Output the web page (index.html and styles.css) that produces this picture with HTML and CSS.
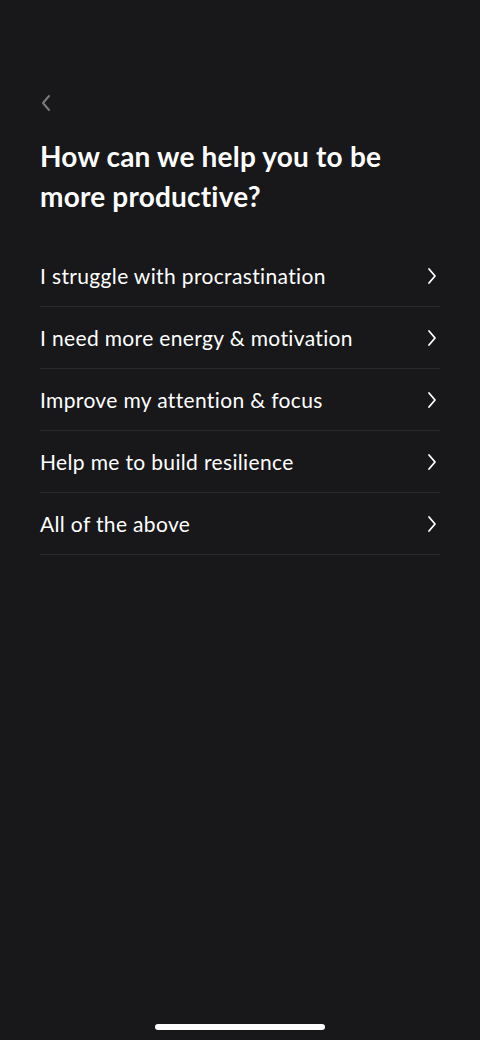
FILE: index.html
```html
<!DOCTYPE html>
<html lang="en">
<head>
    <meta charset="UTF-8">
    <meta name="viewport" content="width=device-width, initial-scale=1.0">
    <title>Productivity Goals</title>
    <link rel="stylesheet" href="styles.css">
</head>
<body>

<div class="screen">
    <button class="back-btn" aria-label="Back">
        <svg width="12" height="18" viewBox="0 0 12 18"><path d="M9 2 L3 9 L9 16" fill="none" stroke="#7a7a7c" stroke-width="2" stroke-linecap="round" stroke-linejoin="round"/></svg>
    </button>

    <h1>How can we help you to be more productive?</h1>

    <ul class="options">
        <li>
            <span>I struggle with procrastination</span>
            <svg width="12" height="18" viewBox="0 0 12 18"><path d="M3 2 L9 9 L3 16" fill="none" stroke="#fff" stroke-width="1.8" stroke-linecap="round" stroke-linejoin="round"/></svg>
        </li>
        <li>
            <span>I need more energy &amp; motivation</span>
            <svg width="12" height="18" viewBox="0 0 12 18"><path d="M3 2 L9 9 L3 16" fill="none" stroke="#fff" stroke-width="1.8" stroke-linecap="round" stroke-linejoin="round"/></svg>
        </li>
        <li>
            <span>Improve my attention &amp; focus</span>
            <svg width="12" height="18" viewBox="0 0 12 18"><path d="M3 2 L9 9 L3 16" fill="none" stroke="#fff" stroke-width="1.8" stroke-linecap="round" stroke-linejoin="round"/></svg>
        </li>
        <li>
            <span>Help me to build resilience</span>
            <svg width="12" height="18" viewBox="0 0 12 18"><path d="M3 2 L9 9 L3 16" fill="none" stroke="#fff" stroke-width="1.8" stroke-linecap="round" stroke-linejoin="round"/></svg>
        </li>
        <li>
            <span>All of the above</span>
            <svg width="12" height="18" viewBox="0 0 12 18"><path d="M3 2 L9 9 L3 16" fill="none" stroke="#fff" stroke-width="1.8" stroke-linecap="round" stroke-linejoin="round"/></svg>
        </li>
    </ul>

    <div class="home-bar"></div>
</div>

</body>
</html>
```
FILE: styles.css
```css
body {
    margin: 0;
    background-color: #18181a;
    font-family: Lato, "Open Sans", sans-serif;
    color: #fff;
}
.screen {
    height: 1040px;
    padding: 0 40px;
    box-sizing: border-box;
    display: flex;
    flex-direction: column;
}
.back-btn {
    margin-top: 94px;
    width: 12px;
    height: 18px;
    padding: 0;
    border: none;
    background: none;
    display: block;
}
.back-btn svg {
    display: block;
}
h1 {
    margin: 24px 0 0;
    font-size: 28px;
    line-height: 40px;
    font-weight: 700;
    letter-spacing: 0.2px;
}
.options {
    list-style: none;
    margin: 29px 0 0;
    padding: 0;
}
.options li {
    height: 61px;
    border-bottom: 1px solid #2b2b2e;
    display: flex;
    align-items: center;
    justify-content: space-between;
    font-size: 21px;
    letter-spacing: 0.35px;
}
.options li svg {
    margin-right: 2px;
}
.home-bar {
    margin: auto auto 10px;
    width: 170px;
    height: 6px;
    border-radius: 3px;
    background-color: #fff;
}
```
